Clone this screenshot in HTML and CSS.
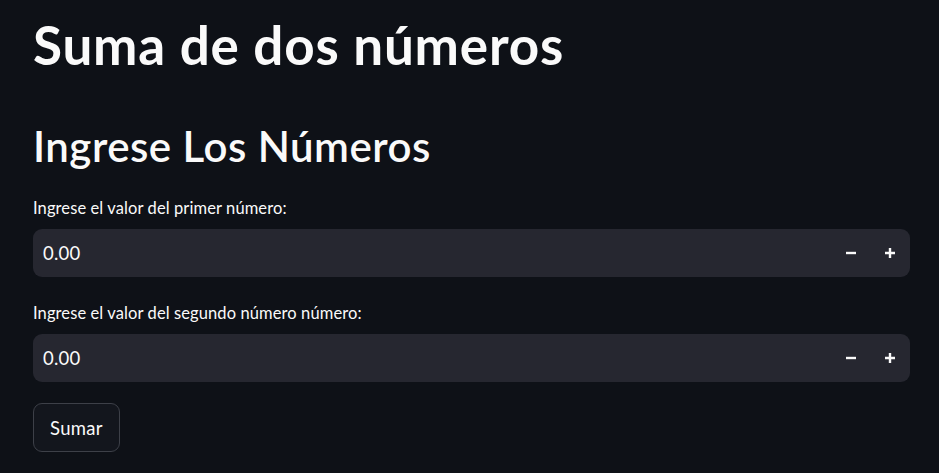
FILE: index.html
```html
<!DOCTYPE html>
<html lang="es">
<head>
<meta charset="utf-8">
<title>Suma de dos números</title>
<link rel="stylesheet" href="styles.css">
</head>
<body>
<main class="app">
  <h1 class="title">Suma de dos números</h1>
  <h2 class="subtitle">Ingrese Los Números</h2>
  <div class="form">
    <div class="field">
      <label class="label">Ingrese el valor del primer número:</label>
      <div class="number-input">
        <span class="value">0.00</span>
        <div class="steps">
          <button class="step" aria-label="menos"><svg width="12" height="12" viewBox="0 0 12 12"><path d="M1 6h10" stroke="#fafafa" stroke-width="2.4"/></svg></button>
          <button class="step" aria-label="más"><svg width="12" height="12" viewBox="0 0 12 12"><path d="M1 6h10M6 1v10" stroke="#fafafa" stroke-width="2.4"/></svg></button>
        </div>
      </div>
    </div>
    <div class="field">
      <label class="label">Ingrese el valor del segundo número número:</label>
      <div class="number-input">
        <span class="value">0.00</span>
        <div class="steps">
          <button class="step" aria-label="menos"><svg width="12" height="12" viewBox="0 0 12 12"><path d="M1 6h10" stroke="#fafafa" stroke-width="2.4"/></svg></button>
          <button class="step" aria-label="más"><svg width="12" height="12" viewBox="0 0 12 12"><path d="M1 6h10M6 1v10" stroke="#fafafa" stroke-width="2.4"/></svg></button>
        </div>
      </div>
    </div>
    <div class="actions">
      <button class="btn">Sumar</button>
    </div>
  </div>
</main>
</body>
</html>
```
FILE: styles.css
```css
html, body {
  margin: 0;
  padding: 0;
  background: #0e1117;
  color: #fafafa;
  font-family: Lato, "Noto Sans", sans-serif;
}
.app {
  width: 877px;
  padding: 14px 0 0 33px;
}
.title {
  margin: 0;
  font-size: 53px;
  line-height: 62px;
  font-weight: 700;
  letter-spacing: 0.8px;
}
.subtitle {
  margin: 45px 0 0;
  font-size: 42px;
  line-height: 50px;
  font-weight: 600;
  letter-spacing: 0.5px;
}
.form {
  margin-top: 27px;
  display: flex;
  flex-direction: column;
  gap: 26px;
}
.field {
  display: flex;
  flex-direction: column;
  gap: 11px;
}
.label {
  font-size: 16.5px;
  line-height: 20px;
  letter-spacing: 0.1px;
}
.number-input {
  height: 48px;
  background: #262730;
  border-radius: 9px;
  display: flex;
  align-items: center;
  justify-content: space-between;
  padding-left: 10px;
}
.value {
  font-size: 18.5px;
  letter-spacing: 0.2px;
}
.steps {
  display: flex;
  height: 100%;
  padding-right: 1px;
}
.step {
  width: 39px;
  height: 100%;
  background: transparent;
  border: 0;
  padding: 0;
  display: flex;
  align-items: center;
  justify-content: center;
}
.actions {
  margin-top: -5px;
}
.btn {
  height: 49px;
  padding: 0 16px;
  background: #13161d;
  border: 1px solid #3d4048;
  border-radius: 9px;
  color: #fafafa;
  font-family: Lato, "Noto Sans", sans-serif;
  font-size: 18.5px;
  letter-spacing: 0.3px;
}
```
